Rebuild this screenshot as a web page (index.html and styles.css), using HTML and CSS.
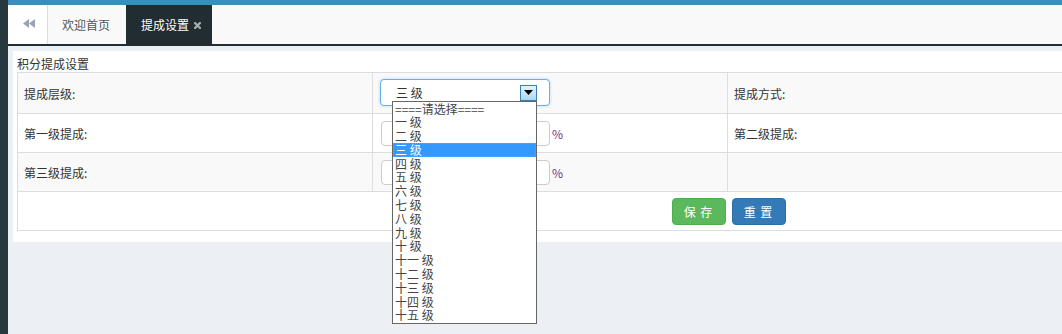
FILE: index.html
```html
<!DOCTYPE html>
<html lang="zh-CN">
<head>
<meta charset="utf-8">
<title>提成设置</title>
<link rel="stylesheet" href="styles.css">
</head>
<body>
<div class="app">
  <aside class="sidebar"></aside>
  <main class="main">
    <div class="topbar"></div>
    <nav class="tabbar">
      <div class="tab tab-back">
        <svg width="12" height="9" viewBox="0 0 12 9"><polygon points="6,0 0,4.5 6,9" fill="#9aa2b3"/><polygon points="12,0 6,4.5 12,9" fill="#9aa2b3"/></svg>
      </div>
      <div class="tab tab-home">欢迎首页</div>
      <div class="tab tab-active">提成设置<svg class="close" width="7" height="7" viewBox="0 0 7 7"><path d="M1 1L6 6M6 1L1 6" stroke="#a9adb2" stroke-width="2.2" stroke-linecap="square"/></svg></div>
    </nav>
    <section class="content">
      <div class="panel">
        <div class="panel-title">积分提成设置</div>
        <div class="grid">
          <div class="cell odd label">提成层级:</div>
          <div class="cell odd">
            <div class="select-wrap">
              <div class="select">
                <span class="select-value">三 级</span>
                <span class="select-btn"><svg width="9" height="5" viewBox="0 0 9 5"><polygon points="0,0 9,0 4.5,5" fill="#000"/></svg></span>
              </div>
              <ul class="dropdown">
                <li>====请选择====</li>
                <li>一 级</li>
                <li>二 级</li>
                <li class="selected">三 级</li>
                <li>四 级</li>
                <li>五 级</li>
                <li>六 级</li>
                <li>七 级</li>
                <li>八 级</li>
                <li>九 级</li>
                <li>十 级</li>
                <li>十一 级</li>
                <li>十二 级</li>
                <li>十三 级</li>
                <li>十四 级</li>
                <li>十五 级</li>
              </ul>
            </div>
          </div>
          <div class="cell odd label">提成方式:</div>
          <div class="cell odd"></div>

          <div class="cell label">第一级提成:</div>
          <div class="cell"><div class="input"></div><span class="pct">%</span></div>
          <div class="cell label">第二级提成:</div>
          <div class="cell"></div>

          <div class="cell odd label">第三级提成:</div>
          <div class="cell odd"><div class="input"></div><span class="pct">%</span></div>
          <div class="cell odd"></div>
          <div class="cell odd"></div>

          <div class="cell actions">
            <button class="btn btn-save">保 存</button>
            <button class="btn btn-reset">重 置</button>
          </div>
        </div>
      </div>
    </section>
  </main>
</div>
</body>
</html>
```

FILE: styles.css
```css
* { box-sizing: border-box; }
html, body {
  margin: 0;
  padding: 0;
  width: 1062px;
  height: 334px;
  overflow: hidden;
  background: #ecf0f5;
  font-family: "Noto Sans CJK SC", "Liberation Sans", sans-serif;
  font-size: 12px;
  color: #333;
}
.app {
  display: flex;
  height: 334px;
}
.sidebar {
  width: 8px;
  flex: 0 0 8px;
  background: #28383f;
}
.main {
  flex: 1;
  min-width: 0;
  display: flex;
  flex-direction: column;
}
.topbar {
  height: 5px;
  background: #3c8dbc;
}
.tabbar {
  display: flex;
  height: 41px;
  background: #f9f9f9;
  border-bottom: 2px solid #222d32;
}
.tab {
  display: flex;
  align-items: center;
  padding: 0 14px;
  color: #555;
  height: 39px;
  line-height: 1;
}
.tab-home { padding: 0 16px 0 14px; }
.tab-back {
  width: 40px;
  justify-content: center;
  padding: 0 0 2px 2px;
  background: #fff;
  border-right: 1px solid #ddd;
}
.tab-active {
  background: #222d32;
  color: #fff;
  padding: 0 11px 0 15px;
  gap: 5px;
}
.close { margin-top: 1px; }
.content {
  padding: 5px 0 0 5px;
}
.panel {
  background: #fff;
  padding: 4px 0 11px 4px;
}
.panel-title {
  height: 17px;
  line-height: 17px;
  color: #333;
}
.grid {
  display: grid;
  grid-template-columns: 355px 355px 356px 356px;
  width: 1422px;
  border-top: 1px solid #ddd;
  border-left: 1px solid #ddd;
}
.cell {
  border-right: 1px solid #ddd;
  border-bottom: 1px solid #ddd;
  height: 39px;
  display: flex;
  align-items: center;
  padding: 0 7px;
  background: #fff;
}
.grid > .cell:nth-child(-n+4) { height: 41px; }
.cell.odd { background: #f9f9f9; }
.cell.label { padding-left: 6px; }
.actions {
  grid-column: 1 / -1;
  justify-content: center;
  gap: 6px;
  padding-top: 1px;
}
.select-wrap {
  position: relative;
  width: 170px;
  height: 27px;
  margin-top: -2px;
}
.select {
  width: 170px;
  height: 27px;
  border: 1px solid #66afe9;
  border-radius: 4px;
  box-shadow: 0 0 3px rgba(102, 175, 233, 0.5);
  background: #fff;
  display: flex;
  align-items: center;
  padding-left: 15px;
  position: relative;
}
.select-value { color: #333; }
.select-btn {
  position: absolute;
  right: 12px;
  top: 5px;
  width: 17px;
  height: 16px;
  border: 1px solid #3c7fb1;
  background: linear-gradient(#e6f3fc, #a9d6f5);
  display: flex;
  align-items: center;
  justify-content: center;
}
.dropdown {
  position: absolute;
  left: 12px;
  top: 22px;
  width: 145px;
  margin: 0;
  padding: 0 0 1px;
  list-style: none;
  background: #fff;
  border: 1px solid #666;
  z-index: 10;
}
.dropdown li {
  height: 13.8px;
  line-height: 13.8px;
  padding-left: 2px;
  color: #444;
  white-space: nowrap;
}
.dropdown li.selected {
  background: #3399ff;
  color: #fff;
  outline: 1px dotted #e08a2a;
  outline-offset: -1px;
}
.input {
  width: 169px;
  height: 25px;
  border: 1px solid #ccc;
  border-radius: 4px;
  background: #fff;
  margin-left: 1px;
}
.pct {
  color: #7e3078;
  margin-left: 2px;
}
.btn {
  width: 54px;
  height: 27px;
  border: 1px solid transparent;
  border-radius: 4px;
  color: #fff;
  font-family: inherit;
  font-size: 12px;
  padding: 0;
  letter-spacing: 1px;
}
.btn-save {
  background: #5cb85c;
  border-color: #4cae4c;
}
.btn-reset {
  background: #337ab7;
  border-color: #2e6da4;
}
```
